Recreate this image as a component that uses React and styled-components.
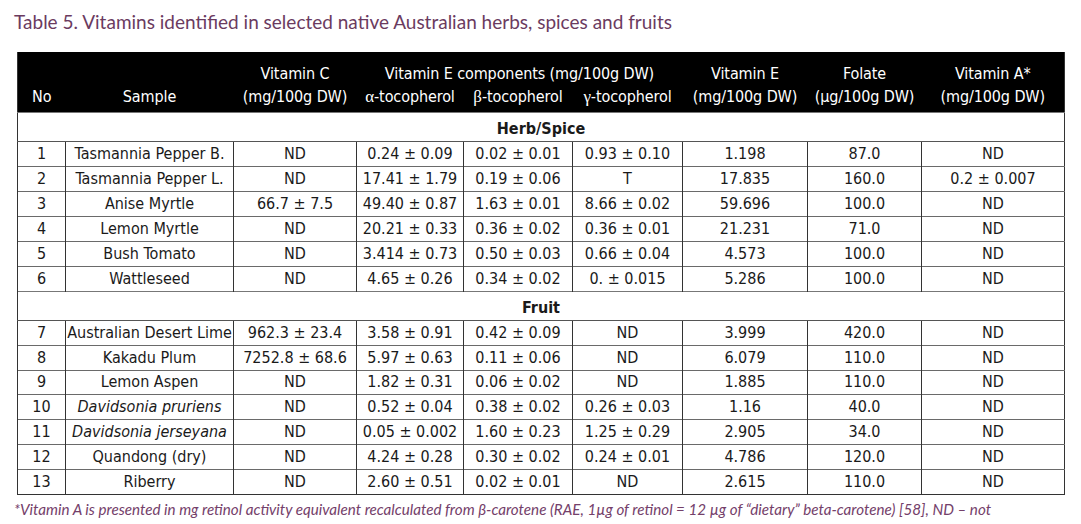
import React from 'react';
import styled, { createGlobalStyle } from 'styled-components';

const GlobalStyle = createGlobalStyle`
  html, body {
    margin: 0;
    padding: 0;
    background: #ffffff;
    overflow: hidden;
  }
  body {
    width: 1081px;
    height: 524px;
  }
`;

const Page = styled.div`
  padding: 9px 0 0 14px;
  font-family: "DejaVu Sans Condensed", "Liberation Sans", sans-serif;
  color: #1a1a1a;
`;

const Title = styled.h1`
  margin: 0 0 17px 0;
  font-family: "Lato", "Open Sans", sans-serif;
  font-weight: 400;
  font-size: 19px;
  line-height: 26px;
  color: #6b3b5f;
`;

const Table = styled.table`
  margin-left: 3px;
  width: 1047px;
  table-layout: fixed;
  border-collapse: collapse;
  border-left: 1px solid #333;
  border-right: 1px solid #333;
  border-bottom: 1px solid #333;
  font-size: 16px;
`;

const HeadCell = styled.th`
  background: #000;
  color: #fff;
  font-weight: 400;
  text-align: center;
  vertical-align: bottom;
  padding: 0 0 4px 0;
  line-height: 23px;
  white-space: nowrap;
  letter-spacing: -0.1px;
`;

const Greek = styled.span`
  font-family: "Liberation Serif", "DejaVu Serif", serif;
  font-size: 17px;
`;

const SectionRow = styled.tr`
  height: 29px;
`;

const SectionCell = styled.td`
  text-align: center;
  font-weight: 700;
  padding: 3px 0 0 0;
  line-height: 20px;
  vertical-align: middle;
  border-top: 1px solid #777;
  border-bottom: 1px solid #555;
`;

const Row = styled.tr`
  height: ${p => p.$h}px;
`;

const Cell = styled.td`
  text-align: center;
  padding: 0;
  line-height: 20px;
  white-space: nowrap;
  border-left: 1px solid #333;
  border-top: 1px solid #6a6a6a;
  font-style: ${p => (p.$italic ? 'italic' : 'normal')};
`;

const Note = styled.p`
  margin: 4px 0 0 0;
  font-family: "Lato", "Open Sans", sans-serif;
  font-style: italic;
  font-size: 15.2px;
  line-height: 21px;
  color: #74406a;
  width: 1005px;
`;

const WIDTHS = [48, 168, 123, 107, 109, 110, 125, 114, 143];

const HERBS = [
  ['1', 'Tasmannia Pepper B.', 'ND', '0.24 ± 0.09', '0.02 ± 0.01', '0.93 ± 0.10', '1.198', '87.0', 'ND'],
  ['2', 'Tasmannia Pepper L.', 'ND', '17.41 ± 1.79', '0.19 ± 0.06', 'T', '17.835', '160.0', '0.2 ± 0.007'],
  ['3', 'Anise Myrtle', '66.7 ± 7.5', '49.40 ± 0.87', '1.63 ± 0.01', '8.66 ± 0.02', '59.696', '100.0', 'ND'],
  ['4', 'Lemon Myrtle', 'ND', '20.21 ± 0.33', '0.36 ± 0.02', '0.36 ± 0.01', '21.231', '71.0', 'ND'],
  ['5', 'Bush Tomato', 'ND', '3.414 ± 0.73', '0.50 ± 0.03', '0.66 ± 0.04', '4.573', '100.0', 'ND'],
  ['6', 'Wattleseed', 'ND', '4.65 ± 0.26', '0.34 ± 0.02', '0. ± 0.015', '5.286', '100.0', 'ND'],
];

const FRUITS = [
  ['7', 'Australian Desert Lime', '962.3 ± 23.4', '3.58 ± 0.91', '0.42 ± 0.09', 'ND', '3.999', '420.0', 'ND'],
  ['8', 'Kakadu Plum', '7252.8 ± 68.6', '5.97 ± 0.63', '0.11 ± 0.06', 'ND', '6.079', '110.0', 'ND'],
  ['9', 'Lemon Aspen', 'ND', '1.82 ± 0.31', '0.06 ± 0.02', 'ND', '1.885', '110.0', 'ND'],
  ['10', 'Davidsonia pruriens', 'ND', '0.52 ± 0.04', '0.38 ± 0.02', '0.26 ± 0.03', '1.16', '40.0', 'ND', true],
  ['11', 'Davidsonia jerseyana', 'ND', '0.05 ± 0.002', '1.60 ± 0.23', '1.25 ± 0.29', '2.905', '34.0', 'ND', true],
  ['12', 'Quandong (dry)', 'ND', '4.24 ± 0.28', '0.30 ± 0.02', '0.24 ± 0.01', '4.786', '120.0', 'ND'],
  ['13', 'Riberry', 'ND', '2.60 ± 0.51', '0.02 ± 0.01', 'ND', '2.615', '110.0', 'ND'],
];

const DataRows = ({ rows, h }) =>
  rows.map(r => (
    <Row key={r[0]} $h={h}>
      {r.slice(0, 9).map((v, i) => (
        <Cell key={i} $italic={i === 1 && r[9]}>{v}</Cell>
      ))}
    </Row>
  ));

export default function App() {
  return (
    <Page>
      <GlobalStyle />
      <Title>Table 5. Vitamins identified in selected native Australian herbs, spices and fruits</Title>
      <Table>
        <colgroup>
          {WIDTHS.map((w, i) => <col key={i} style={{ width: w }} />)}
        </colgroup>
        <thead>
          <tr style={{ height: 33 }}>
            <HeadCell rowSpan={2}>No</HeadCell>
            <HeadCell rowSpan={2}>Sample</HeadCell>
            <HeadCell rowSpan={2}>Vitamin C<br />(mg/100g DW)</HeadCell>
            <HeadCell colSpan={3} style={{ paddingBottom: 0 }}>Vitamin E components (mg/100g DW)</HeadCell>
            <HeadCell rowSpan={2}>Vitamin E<br />(mg/100g DW)</HeadCell>
            <HeadCell rowSpan={2}>Folate<br />(µg/100g DW)</HeadCell>
            <HeadCell rowSpan={2}>Vitamin A*<br />(mg/100g DW)</HeadCell>
          </tr>
          <tr style={{ height: 27 }}>
            <HeadCell><Greek>α</Greek>-tocopherol</HeadCell>
            <HeadCell><Greek>β</Greek>-tocopherol</HeadCell>
            <HeadCell><Greek>γ</Greek>-tocopherol</HeadCell>
          </tr>
        </thead>
        <tbody>
          <SectionRow>
            <SectionCell colSpan={9}>Herb/Spice</SectionCell>
          </SectionRow>
          <DataRows rows={HERBS} h={25} />
          <SectionRow>
            <SectionCell colSpan={9}>Fruit</SectionCell>
          </SectionRow>
          <DataRows rows={FRUITS} h={24.8} />
        </tbody>
      </Table>
      <Note>
        *Vitamin A is presented in mg retinol activity equivalent recalculated from β-carotene (RAE, 1µg of retinol = 12 µg of “dietary” beta-carotene) [58], ND – not detected; T – trace.
      </Note>
    </Page>
  );
}
